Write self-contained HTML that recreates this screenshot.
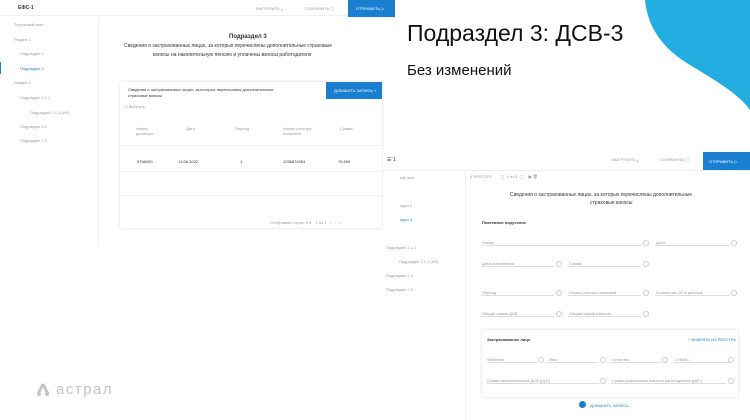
<!DOCTYPE html>
<html><head><meta charset="utf-8"><style>
*{margin:0;padding:0;box-sizing:border-box}
body{width:750px;height:420px;overflow:hidden;background:#fff;position:relative;font-family:"Liberation Sans","DejaVu Sans",sans-serif;color:#333}
.a{position:absolute;white-space:nowrap}
.t{position:absolute;white-space:nowrap;font-size:4px;color:#999}
.d{color:#333}
.b{color:#1a7fcf}
.ln{position:absolute;height:1px;background:#ddd}
.ic{position:absolute;width:6px;height:6px;border:1px solid #ccc;border-radius:50%}
.btn{position:absolute;background:#1a7fd0;color:#fff;font-size:4px}
</style></head><body>
<!-- blue blob -->
<svg class="a" style="left:0;top:0" width="750" height="420"><path d="M645 0 C648 30 665 50 690 65 C715 80 740 95 750 110 L750 0 Z" fill="#23aee1"/></svg>

<!-- left screenshot -->
<div class="a" style="left:0;top:0;width:395px;height:16px;border-bottom:1px solid #eee"></div>
<div class="t d" style="left:18px;top:5px;font-size:5px;font-weight:bold">ЕФС-1</div>
<div class="t" style="left:256px;top:6px">ВЫГРУЗИТЬ ⤓</div>
<div class="t" style="left:305px;top:6px">СОХРАНИТЬ ▢</div>
<div class="btn" style="left:348px;top:0;width:47px;height:17px;padding:6px 0 0 8px">ОТПРАВИТЬ ▷</div>
<div class="a" style="left:98px;top:17px;width:1px;height:228px;background:#f0f0f0"></div>
<div class="t" style="left:14px;top:22px">Титульный лист</div>
<div class="t" style="left:14px;top:37px">Раздел 1</div>
<div class="t" style="left:20px;top:51px">Подраздел 2</div>
<div class="t b" style="left:20px;top:66px">Подраздел 3</div>
<div class="a" style="left:0;top:62px;width:1px;height:12px;background:#1a7fcf"></div>
<div class="t" style="left:14px;top:80px">Раздел 2</div>
<div class="t" style="left:20px;top:95px">Подраздел 2.1.1</div>
<div class="t" style="left:30px;top:110px">Подраздел 2.1.1 (ИЛ)</div>
<div class="t" style="left:20px;top:124px">Подраздел 2.2</div>
<div class="t" style="left:20px;top:138px">Подраздел 2.3</div>
<div class="a d" style="left:229px;top:34px;font-size:6px;font-weight:bold">Подраздел 3</div>
<div class="a" style="left:124px;top:43px;font-size:5px;color:#333">Сведения о застрахованных лицах, за которых перечислены дополнительные страховые</div>
<div class="a" style="left:153px;top:52px;font-size:5px;color:#333">взносы на накопительную пенсию и уплачены взносы работодателя</div>
<div class="a" style="left:120px;top:82px;width:262px;height:146px;box-shadow:0 0 3px rgba(0,0,0,.15);border-radius:2px"></div>
<div class="t d" style="left:128px;top:87px">Сведения о застрахованных лицах, за которых перечислены дополнительные</div>
<div class="t d" style="left:128px;top:93px">страховые взносы</div>
<div class="btn" style="left:326px;top:82px;width:56px;height:17px;padding:6px 0 0 8px">ДОБАВИТЬ ЗАПИСЬ +</div>
<div class="t" style="left:124px;top:104px">☐ Выбрать</div>
<div class="t" style="left:136px;top:126px">Номер</div><div class="t" style="left:136px;top:131px">договора</div>
<div class="t" style="left:186px;top:126px">Дата</div>
<div class="t" style="left:235px;top:126px">Период</div>
<div class="t" style="left:283px;top:126px">Номер реестра</div><div class="t" style="left:283px;top:131px">платежей</div>
<div class="t" style="left:340px;top:126px">Сумма</div>
<div class="ln" style="left:120px;top:145px;width:262px;background:#f2f2f2"></div>
<div class="t d" style="left:137px;top:159px">9758490</div>
<div class="t d" style="left:178px;top:159px">13.06.2022</div>
<div class="t d" style="left:240px;top:159px">1</div>
<div class="t d" style="left:283px;top:159px">1256874963</div>
<div class="t d" style="left:338px;top:159px">76 899</div>
<div class="ln" style="left:120px;top:171px;width:262px;background:#f2f2f2"></div>
<div class="ln" style="left:120px;top:195px;width:262px;background:#f2f2f2"></div>
<div class="t" style="left:270px;top:220px">Отображать строк: 5 ▾ &nbsp;&nbsp; 1 из 1 &nbsp; ‹ &nbsp; › &nbsp; »</div>

<!-- title -->
<div class="a" style="left:407px;top:20px;font-size:23px;color:#111">Подраздел 3: ДСВ-3</div>
<div class="a" style="left:407px;top:62px;font-size:15px;color:#111">Без изменений</div>

<!-- right screenshot -->
<div class="a" style="left:383px;top:152px;width:367px;height:268px;background:#fff"></div>
<div class="a" style="left:383px;top:170px;width:367px;height:1px;background:#eee"></div>
<div class="t d" style="left:387px;top:157px;font-size:5px">☰ 1</div>
<div class="t" style="left:612px;top:157px">ВЫГРУЗИТЬ ⤓</div>
<div class="t" style="left:660px;top:157px">СОХРАНИТЬ ▢</div>
<div class="btn" style="left:703px;top:152px;width:47px;height:18px;padding:7px 0 0 6px">ОТПРАВИТЬ ▷</div>
<div class="a" style="left:465px;top:171px;width:1px;height:249px;background:#f0f0f0"></div>
<div class="t" style="left:400px;top:175px">ый лист</div>
<div class="t" style="left:400px;top:203px">одел 2</div>
<div class="t b" style="left:400px;top:217px">одел 3</div>
<div class="t" style="left:386px;top:245px">Подраздел 2.1.1</div>
<div class="t" style="left:399px;top:259px">Подраздел 2.1.1 (ИЛ)</div>
<div class="t" style="left:386px;top:273px">Подраздел 2.2</div>
<div class="t" style="left:386px;top:287px">Подраздел 2.3</div>
<div class="t" style="left:470px;top:174px">К РЕЕСТРУ &nbsp;&nbsp;&nbsp;&nbsp;&nbsp;&nbsp; ▢ &nbsp;1 из 5 &nbsp;▢ &nbsp;&nbsp; ▣ 🗑</div>
<div class="a" style="left:510px;top:192px;font-size:5px;color:#333">Сведения о застрахованных лицах, за которых перечислены дополнительные</div>
<div class="a" style="left:590px;top:200px;font-size:5px;color:#333">страховые взносы</div>
<div class="t d" style="left:482px;top:220px;font-weight:bold">Платежное поручение</div>
<div class="t" style="left:482px;top:240px">Номер</div><div class="ln" style="left:481px;top:245px;width:160px"></div><div class="ic" style="left:643px;top:240px"></div>
<div class="t" style="left:656px;top:240px">Дата</div><div class="ln" style="left:655px;top:245px;width:75px"></div><div class="ic" style="left:731px;top:240px"></div>
<div class="t" style="left:482px;top:261px">Дата исполнения</div><div class="ln" style="left:481px;top:266px;width:73px"></div><div class="ic" style="left:556px;top:261px"></div>
<div class="t" style="left:569px;top:261px">Сумма</div><div class="ln" style="left:568px;top:266px;width:73px"></div><div class="ic" style="left:643px;top:261px"></div>
<div class="t" style="left:482px;top:290px">Период</div><div class="ln" style="left:481px;top:295px;width:73px"></div><div class="ic" style="left:556px;top:290px"></div>
<div class="t" style="left:569px;top:290px">Номер реестра платежей</div><div class="ln" style="left:568px;top:295px;width:73px"></div><div class="ic" style="left:643px;top:290px"></div>
<div class="t" style="left:656px;top:290px">Количество ЗЛ в реестре</div><div class="ln" style="left:655px;top:295px;width:75px"></div><div class="ic" style="left:731px;top:290px"></div>
<div class="t" style="left:482px;top:311px">Общая сумма ДСВ</div><div class="ln" style="left:481px;top:316px;width:73px"></div><div class="ic" style="left:556px;top:311px"></div>
<div class="t" style="left:569px;top:311px">Общая сумма взносов</div><div class="ln" style="left:568px;top:316px;width:73px"></div><div class="ic" style="left:643px;top:311px"></div>
<div class="a" style="left:482px;top:330px;width:256px;height:67px;box-shadow:0 0 3px rgba(0,0,0,.15);border-radius:3px"></div>
<div class="t d" style="left:487px;top:337px;font-weight:bold">Застрахованное лицо</div>
<div class="t b" style="left:688px;top:337px">+ ВЫБРАТЬ ИЗ РЕЕСТРА</div>
<div class="t" style="left:487px;top:357px">Фамилия</div><div class="ln" style="left:487px;top:362px;width:50px"></div><div class="ic" style="left:538px;top:357px"></div>
<div class="t" style="left:549px;top:357px">Имя</div><div class="ln" style="left:548px;top:362px;width:50px"></div><div class="ic" style="left:600px;top:357px"></div>
<div class="t" style="left:612px;top:357px">Отчество</div><div class="ln" style="left:611px;top:362px;width:50px"></div><div class="ic" style="left:662px;top:357px"></div>
<div class="t" style="left:675px;top:357px">СНИЛС</div><div class="ln" style="left:674px;top:362px;width:55px"></div><div class="ic" style="left:728px;top:357px"></div>
<div class="t" style="left:487px;top:378px">Сумма перечисленных ДСВ (руб.)</div><div class="ln" style="left:487px;top:383px;width:112px"></div><div class="ic" style="left:600px;top:378px"></div>
<div class="t" style="left:612px;top:378px">Сумма уплаченных взносов работодателя (руб.)</div><div class="ln" style="left:611px;top:383px;width:115px"></div><div class="ic" style="left:728px;top:378px"></div>
<div class="a" style="left:579px;top:401px;width:7px;height:7px;border-radius:50%;background:#1a7fcf"></div>
<div class="t b" style="left:590px;top:403px">ДОБАВИТЬ ЗАПИСЬ</div>

<!-- logo -->
<svg class="a" style="left:36px;top:383px" width="14" height="14"><path d="M7 1 L2 11 M7 1 L12 11" stroke="#c4c4c4" stroke-width="3" fill="none"/><circle cx="3" cy="11" r="2" fill="#c4c4c4"/><circle cx="11" cy="11" r="2" fill="#c4c4c4"/></svg>
<div class="a" style="left:56px;top:381px;font-size:15px;color:#c4c4c4;letter-spacing:1.5px">астрал</div>
</body></html>
